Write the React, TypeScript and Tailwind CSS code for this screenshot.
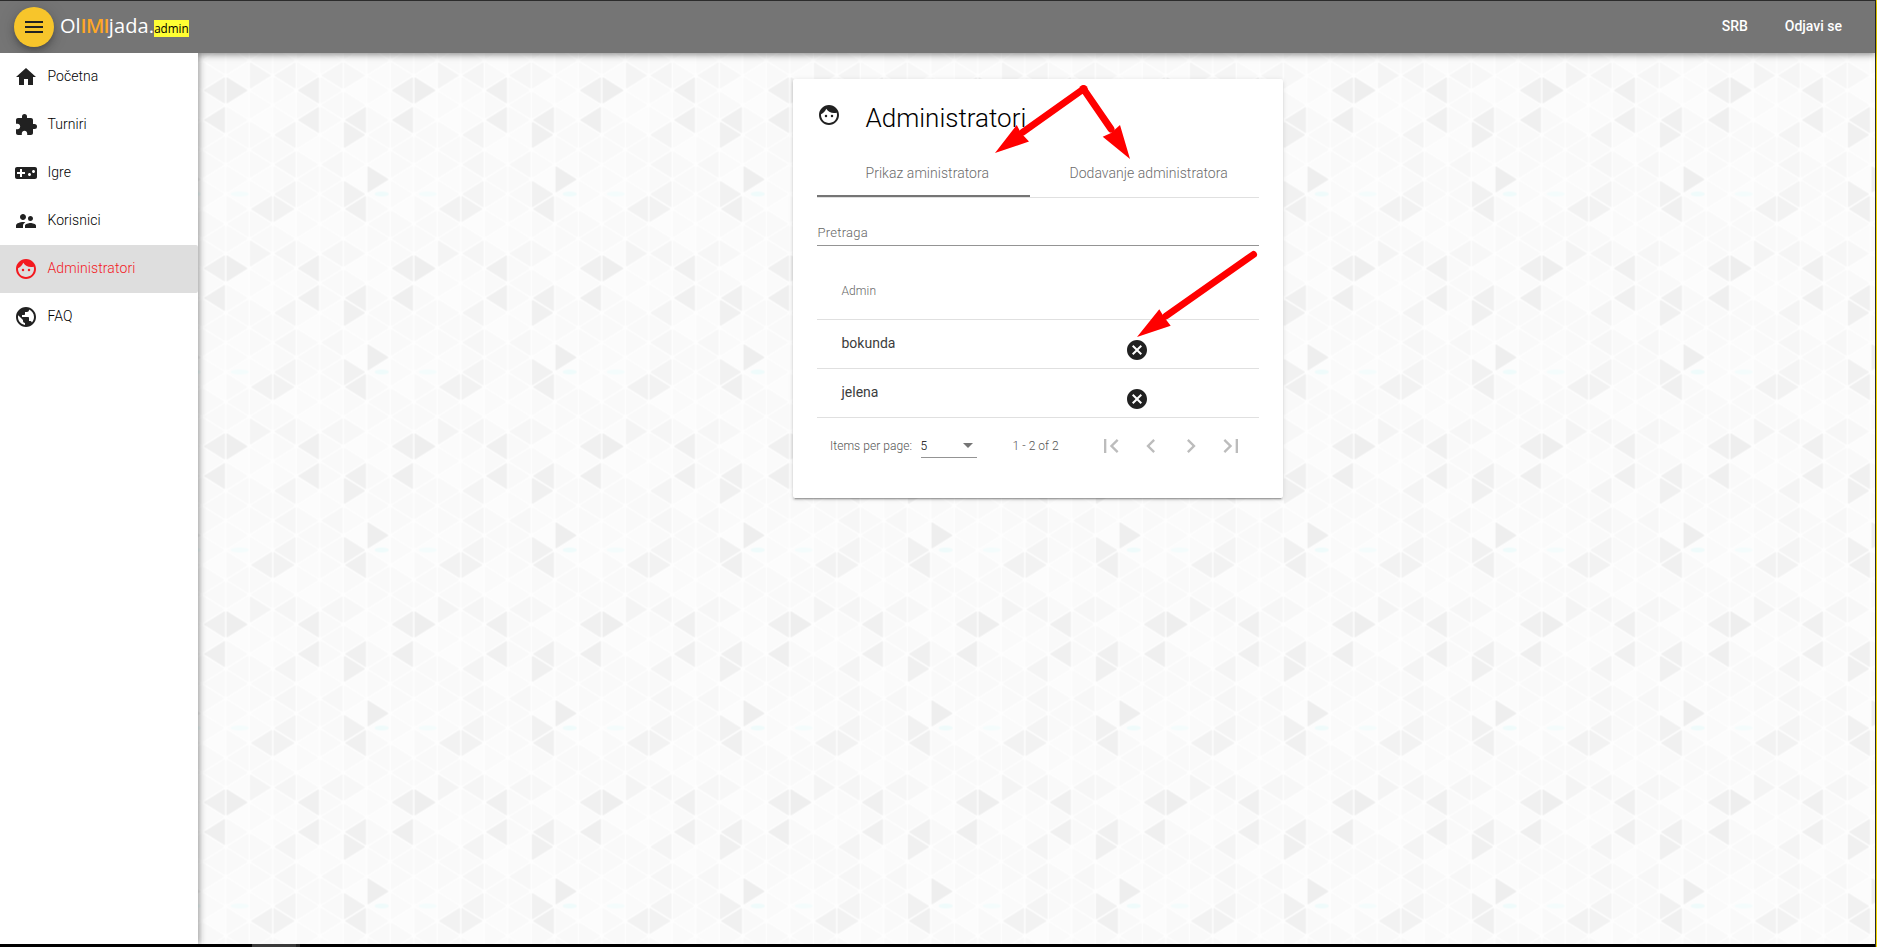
import React from "react";
import {
  MdHome, MdExtension, MdVideogameAsset, MdSupervisorAccount, MdFace, MdPublic,
  MdMenu, MdCancel, MdFirstPage, MdChevronLeft, MdChevronRight, MdLastPage,
} from "react-icons/md";

const COL = 23.5;
const HALF = 178 / 12;

// Accent shades of the tile, keyed by "column,half-row".
const ACCENTS: Record<string, string> = {
  "0,1": "#eeeeee", "7,1": "#f0f0f0", "7,3": "#efefef", "3,1": "#f0f0f0", "3,3": "#f0f0f0",
  "5,3": "#f0f0f0", "5,4": "#f0f0f0", "2,4": "#f4f4f4", "1,0": "#f4f4f4", "2,0": "#f5f5f5",
  "4,0": "#f6f6f6", "5,0": "#f7f7f7", "6,7": "#eeeeee", "5,8": "#f1f1f1", "5,9": "#f0f0f0",
  "1,9": "#f2f2f2", "2,9": "#f2f2f2", "2,8": "#f4f4f4", "2,6": "#f6f6f6", "4,6": "#f7f7f7",
};

function Triangles() {
  const out: React.ReactNode[] = [];
  for (let c = 0; c < 8; c++) {
    for (let v = 0; v <= 12; v++) {
      const key = `${c},${v % 12}`;
      const right = (c + v) % 2 === 1;
      const light = right ? ["#f9f9f9", "#fafafa", "#f9f9f9"] : ["#fbfbfb", "#f9f9f9", "#fcfcfc"];
      const fill = ACCENTS[key] ?? light[(c * 5 + (v % 12) * 7) % 3];
      const x0 = c * COL, x1 = x0 + COL, y = v * HALF;
      const bx = right ? x0 + 1.4 : x1 - 1.4;
      const ax = right ? x1 - 2.6 : x0 + 2.6;
      out.push(
        <path key={`${c},${v}`} d={`M${bx} ${y - HALF + 2.6}L${ax} ${y}L${bx} ${y + HALF - 2.6}Z`}
          fill={fill} stroke={fill} strokeWidth="1.4" strokeLinejoin="round" />
      );
    }
  }
  return <>{out}</>;
}

function Backdrop() {
  return (
    <svg className="absolute inset-0 h-full w-full" aria-hidden="true">
      <defs>
        <pattern id="tri" width="188" height="178" patternUnits="userSpaceOnUse" x="39.7" y="22.5">
          <rect width="188" height="178" fill="#fefefe" />
          <Triangles />
          <ellipse cx="14" cy="118.5" rx="9" ry="2.4" fill="#f4fcfc" />
          <ellipse cx="156" cy="118.5" rx="7" ry="2.4" fill="#effbfb" />
        </pattern>
      </defs>
      <rect width="100%" height="100%" fill="url(#tri)" />
    </svg>
  );
}

const NAV = [
  { label: "Početna", Icon: MdHome },
  { label: "Turniri", Icon: MdExtension },
  { label: "Igre", Icon: MdVideogameAsset },
  { label: "Korisnici", Icon: MdSupervisorAccount },
  { label: "Administratori", Icon: MdFace, active: true },
  { label: "FAQ", Icon: MdPublic },
];

function Header() {
  return (
    <header className="relative z-10 flex h-[53px] shrink-0 items-center border-t border-[#2b2b2b] bg-[#757575] pl-3.5 pr-[33px] text-white shadow-[0_2px_4px_-1px_rgba(0,0,0,0.2),0_4px_5px_0_rgba(0,0,0,0.14),0_1px_10px_0_rgba(0,0,0,0.12)]">
      <button className="flex h-10 w-10 items-center justify-center rounded-full bg-[#f7c52b] text-[#222] shadow-[0_3px_5px_-1px_rgba(0,0,0,0.2),0_6px_10px_0_rgba(0,0,0,0.14),0_1px_18px_0_rgba(0,0,0,0.12)]">
        <MdMenu size={24} />
      </button>
      <div className="ml-1.5 flex items-baseline whitespace-nowrap pb-0.5 font-['Open_Sans','Noto_Sans',sans-serif] text-[20px] leading-7">
        <span>Ol</span>
        <span className="font-semibold tracking-[-0.8px] text-[#ffa726]">IMI</span>
        <span className="tracking-[0.1px]">jada.</span>
        <span className="bg-[#ffff33] text-[11.7px] leading-[17px] text-black">admin</span>
      </div>
      <div className="ml-auto flex gap-[37px] pb-0.5 text-sm font-medium">
        <span>SRB</span>
        <span>Odjavi se</span>
      </div>
    </header>
  );
}

function Sidebar() {
  return (
    <nav className="relative z-20 w-[198px] shrink-0 bg-white shadow-[2px_0_6px_rgba(0,0,0,0.35)] [clip-path:inset(0_-20px_0_0)]">
      {NAV.map(({ label, Icon, active }) => (
        <div key={label}
          className={active
            ? "flex h-12 items-center gap-[9.5px] rounded-r-[2px] bg-[#dedede] pl-3.5 text-[#f3191f]"
            : "flex h-12 items-center gap-[9.5px] pl-3.5 text-[#212121]"}>
          <Icon size={24} />
          <span className={active ? "pb-[2px] text-sm font-light tracking-[0.1px]" : "pb-[2px] text-sm font-light tracking-[0.05px] text-black"}>{label}</span>
        </div>
      ))}
    </nav>
  );
}

function Arrows() {
  return (
    <svg className="absolute left-0 top-0" width="490" height="300" fill="#ff0000" stroke="#ff0000" aria-hidden="true">
      <circle cx="290.5" cy="10.300" r="4.300" stroke="none" />
      <path d="M230 53L290.500 10L318 50" fill="none" strokeWidth="7" strokeLinecap="round" strokeLinejoin="round" />
      <path d="M202 74L223.700 46L228 54L236 62.500Z" stroke="none" />
      <path d="M337 80L309.700 57.700L318 54L327 46Z" stroke="none" />
      <path d="M373 237L460.500 175.500" fill="none" strokeWidth="7" strokeLinecap="round" />
      <path d="M344 258L366.300 230.300L371 238L377.700 246.700Z" stroke="none" />
    </svg>
  );
}

function Card() {
  return (
    <section className="relative mt-[26px] flex h-[419px] w-[490px] flex-col rounded-[2px] bg-white px-6 text-[#212121] shadow-[0_3px_1px_-2px_rgba(0,0,0,0.2),0_2px_2px_0_rgba(0,0,0,0.14),0_1px_5px_0_rgba(0,0,0,0.12)]">
      <div className="flex h-[70px] items-start pt-6">
        <MdFace size={24} />
        <h1 className="ml-[25px] text-[26px] font-light leading-[30px] text-black">Administratori</h1>
      </div>
      <div className="flex h-[49px] border-b border-[#e0e0e0] text-sm font-light text-[#6c6c6c]">
        <div className="h-12 w-[213px] border-b-2 border-[#757575] pl-[49px] pt-[14px] tracking-[0.04px]">Prikaz aministratora</div>
        <div className="pl-10 pt-[14px] tracking-[0.04px]">Dodavanje administratora</div>
      </div>
      <div className="h-12 border-b border-[#949494] pl-px pt-[25px] text-[13px] font-light leading-5 tracking-[0.25px] text-[#666]">Pretraga</div>
      <div className="h-[74px] border-b border-[#e0e0e0] pl-[25px] pt-9 text-xs font-light leading-[18px] tracking-[0.1px] text-[#666]">Admin</div>
      {["bokunda", "jelena"].map((name) => (
        <div key={name} className="flex h-[49px] items-start border-b border-[#e0e0e0] pl-[25px]">
          <span className="w-[283px] pt-[13px] text-sm text-[#3c3c3c]">{name}</span>
          <MdCancel size={24} className="mt-[18px]" />
        </div>
      ))}
      <div className="flex h-14 items-center pl-[13.5px] text-xs font-light text-[#555]">
        <span className="w-[90.5px] tracking-[0.05px]">Items per page:</span>
        <div className="flex h-6 w-14 items-center justify-between border-b border-[#949494] pr-1 text-black">
          <span>5</span>
          <svg width="10" height="5" className="text-[#757575]"><path d="M0 0H10L5 5Z" fill="currentColor" /></svg>
        </div>
        <span className="ml-9 w-[84px] tracking-[0.05px]">1 - 2 of 2</span>
        <div className="flex gap-3 text-[#bcbcbc]">
          <MdFirstPage size={28} />
          <MdChevronLeft size={28} />
          <MdChevronRight size={28} />
          <MdLastPage size={28} />
        </div>
      </div>
      <Arrows />
    </section>
  );
}

export default function App() {
  return (
    <div className="flex h-[947px] w-full overflow-hidden bg-white font-[Roboto,sans-serif]">
      <div className="flex min-w-0 flex-1 flex-col">
        <Header />
        <div className="flex min-h-0 flex-1">
          <Sidebar />
          <main className="relative -ml-[12px] flex flex-1 justify-center overflow-hidden pl-[14px]">
            <Backdrop />
            <Card />
          </main>
        </div>
        <footer className="flex h-[3px] shrink-0 bg-black pl-[252px]">
          <div className="w-11 bg-[#3a3a3a]" />
          <div className="w-1 bg-[#222]" />
        </footer>
      </div>
      <div className="w-px bg-[#2b2b2b]" />
      <div className="w-px bg-[#f2d500]" />
    </div>
  );
}
